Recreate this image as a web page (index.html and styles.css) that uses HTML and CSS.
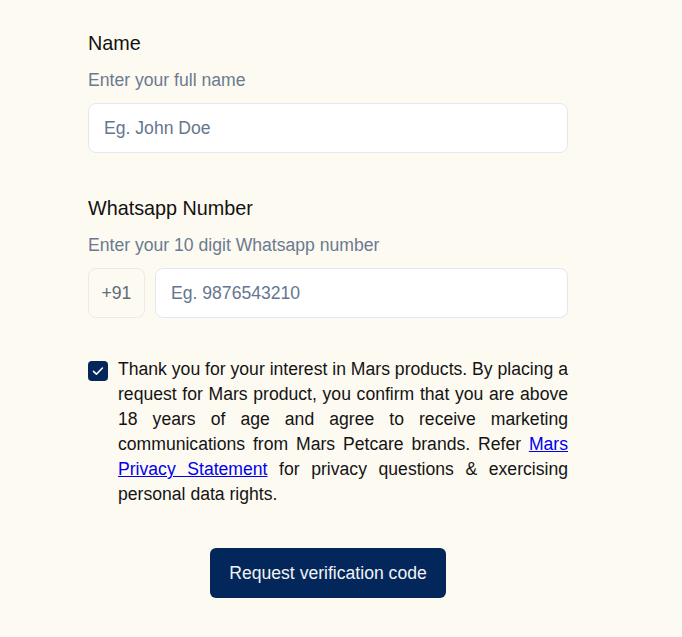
FILE: index.html
```html
<!DOCTYPE html>
<html lang="en">
<head>
   <meta charset="UTF-8">
   <meta name="viewport" content="width=device-width, initial-scale=1.0">
   <title>Request Verification Code</title>
   <link rel="stylesheet" href="styles.css">
</head>
<body>
    <form class="signup">
        <!-- Name -->
        <div class="field">
            <label class="field-label" for="name">Name</label>
            <p class="field-hint">Enter your full name</p>
            <input class="text-input" type="text" id="name" placeholder="Eg. John Doe">
        </div>

        <!-- Whatsapp -->
        <div class="field">
            <label class="field-label" for="phone">Whatsapp Number</label>
            <p class="field-hint">Enter your 10 digit Whatsapp number</p>
            <div class="phone-row">
                <span class="country-code">+91</span>
                <input class="text-input" type="tel" id="phone" placeholder="Eg. 9876543210">
            </div>
        </div>

        <!-- Consent -->
        <div class="consent">
            <span class="checkbox">
                <svg width="14" height="14" viewBox="0 0 14 14" fill="none">
                    <path d="M2.5 7.4l2.9 2.8 6-6.2" stroke="#fff" stroke-width="1.6" stroke-linecap="round" stroke-linejoin="round"/>
                </svg>
            </span>
            <p class="consent-text">Thank you for your interest in Mars products. By placing a request for Mars product, you confirm that you are above 18 years of age and agree to receive marketing communications from Mars Petcare brands. Refer <a href="#">Mars Privacy Statement</a> for privacy questions &amp; exercising personal data rights.</p>
        </div>

        <div class="actions">
            <button type="button" class="submit-button">Request verification code</button>
        </div>
    </form>
</body>
</html>
```

FILE: styles.css
```css
* {
    margin: 0;
    padding: 0;
    box-sizing: border-box;
}

body {
    font-family: "Liberation Sans", Arial, sans-serif;
    background-color: #fdfaf1;
    color: #111;
}

.signup {
    width: 480px;
    margin-left: 88px;
    padding-top: 29px;
}

.field {
    margin-bottom: 41px;
}

.field-label {
    display: block;
    font-size: 19.8px;
    line-height: 28px;
    color: #111;
}

.field-hint {
    font-size: 17.6px;
    line-height: 24px;
    color: #6b7a90;
    margin-top: 11px;
    margin-bottom: 11px;
}

.text-input {
    display: block;
    width: 100%;
    height: 50px;
    padding: 0 15px;
    border: 1px solid #e2e8f0;
    border-radius: 8px;
    background-color: #fff;
    font-family: inherit;
    font-size: 17.6px;
    color: #111;
}

.text-input::placeholder {
    color: #66768f;
}

.phone-row {
    display: flex;
    gap: 10px;
}

.country-code {
    width: 57px;
    height: 50px;
    flex-shrink: 0;
    display: flex;
    align-items: center;
    justify-content: center;
    border: 1px solid #e9ebe8;
    border-radius: 8px;
    font-size: 17.6px;
    color: #5f6b7d;
}

.consent {
    display: flex;
    gap: 10px;
    margin-top: -2px;
}

.checkbox {
    width: 20px;
    height: 20px;
    flex-shrink: 0;
    margin-top: 4px;
    border-radius: 4px;
    background-color: #03265b;
    display: flex;
    align-items: center;
    justify-content: center;
}

.consent-text {
    font-size: 17.6px;
    line-height: 25px;
    text-align: justify;
    color: #141414;
}

.consent-text a {
    color: #0000ee;
}

.actions {
    display: flex;
    justify-content: center;
    margin-top: 41px;
}

.submit-button {
    width: 236px;
    height: 50px;
    border: none;
    border-radius: 6px;
    background-color: #03265b;
    color: #f1f3f7;
    font-family: inherit;
    font-size: 17.6px;
    cursor: pointer;
}
```
